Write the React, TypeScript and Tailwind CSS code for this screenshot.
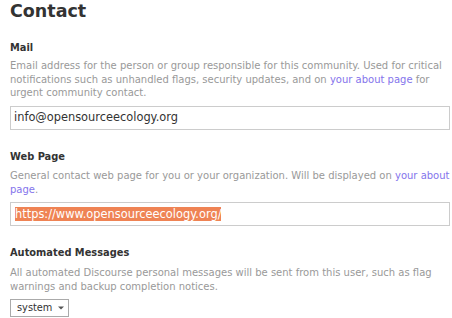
export default function App() {
  const label = "text-[9.85px] leading-[14px] font-bold text-[#333]";
  const desc = "w-[442px] text-[10px] leading-[13.7px] text-[#999]";
  const link = "text-[#8474ec]";
  const input =
    "w-[440px] h-[24px] border border-[#cccccc] bg-white px-[3px] flex items-center text-[11.4px] text-[#333] whitespace-nowrap";

  return (
    <div className="w-[452px] h-[318px] overflow-hidden bg-white px-[10px] font-['DejaVu_Sans',sans-serif]">
      <h1 className="text-[17.5px] leading-[22px] font-bold text-[#333]">Contact</h1>

      <div className="mt-[18.6px]">
        <div className={label}>Mail</div>
        <p className={`${desc} mt-[4.4px]`}>
          Email address for the person or group responsible for this community. Used for critical
          notifications such as unhandled flags, security updates, and on{' '}
          <span className={link}>your about page</span> for urgent community contact.
        </p>
        <div className={`${input} mt-[5.9px]`}>info@opensourceecology.org</div>
      </div>

      <div className="mt-[19.6px]">
        <div className={label}>Web Page</div>
        <p className={`${desc} mt-[5.4px]`}>
          General contact web page for you or your organization. Will be displayed on{' '}
          <span className={link}>your about page</span>.
        </p>
        <div className={`${input} mt-[5.6px]`}>
          <span className="bg-[#ef8354] text-white leading-[14.5px] ml-[1px]">
            https://www.opensourceecology.org/
          </span>
        </div>
      </div>

      <div className="mt-[20.3px]">
        <div className={label}>Automated Messages</div>
        <p className={`${desc} mt-[6px]`}>
          All automated Discourse personal messages will be sent from this user, such as flag
          warnings and backup completion notices.
        </p>
        <div className="mt-[5.2px] w-[59px] h-[18px] border border-[#aaaaaa] bg-white flex items-center pl-[6px] text-[9.8px] text-[#333]">
          <span>system</span>
          <svg className="ml-[6px]" width="6" height="4" viewBox="0 0 6 4">
            <path d="M0 0.5 L6 0.5 L3 3.5 Z" fill="#555" />
          </svg>
        </div>
      </div>
    </div>
  );
}
